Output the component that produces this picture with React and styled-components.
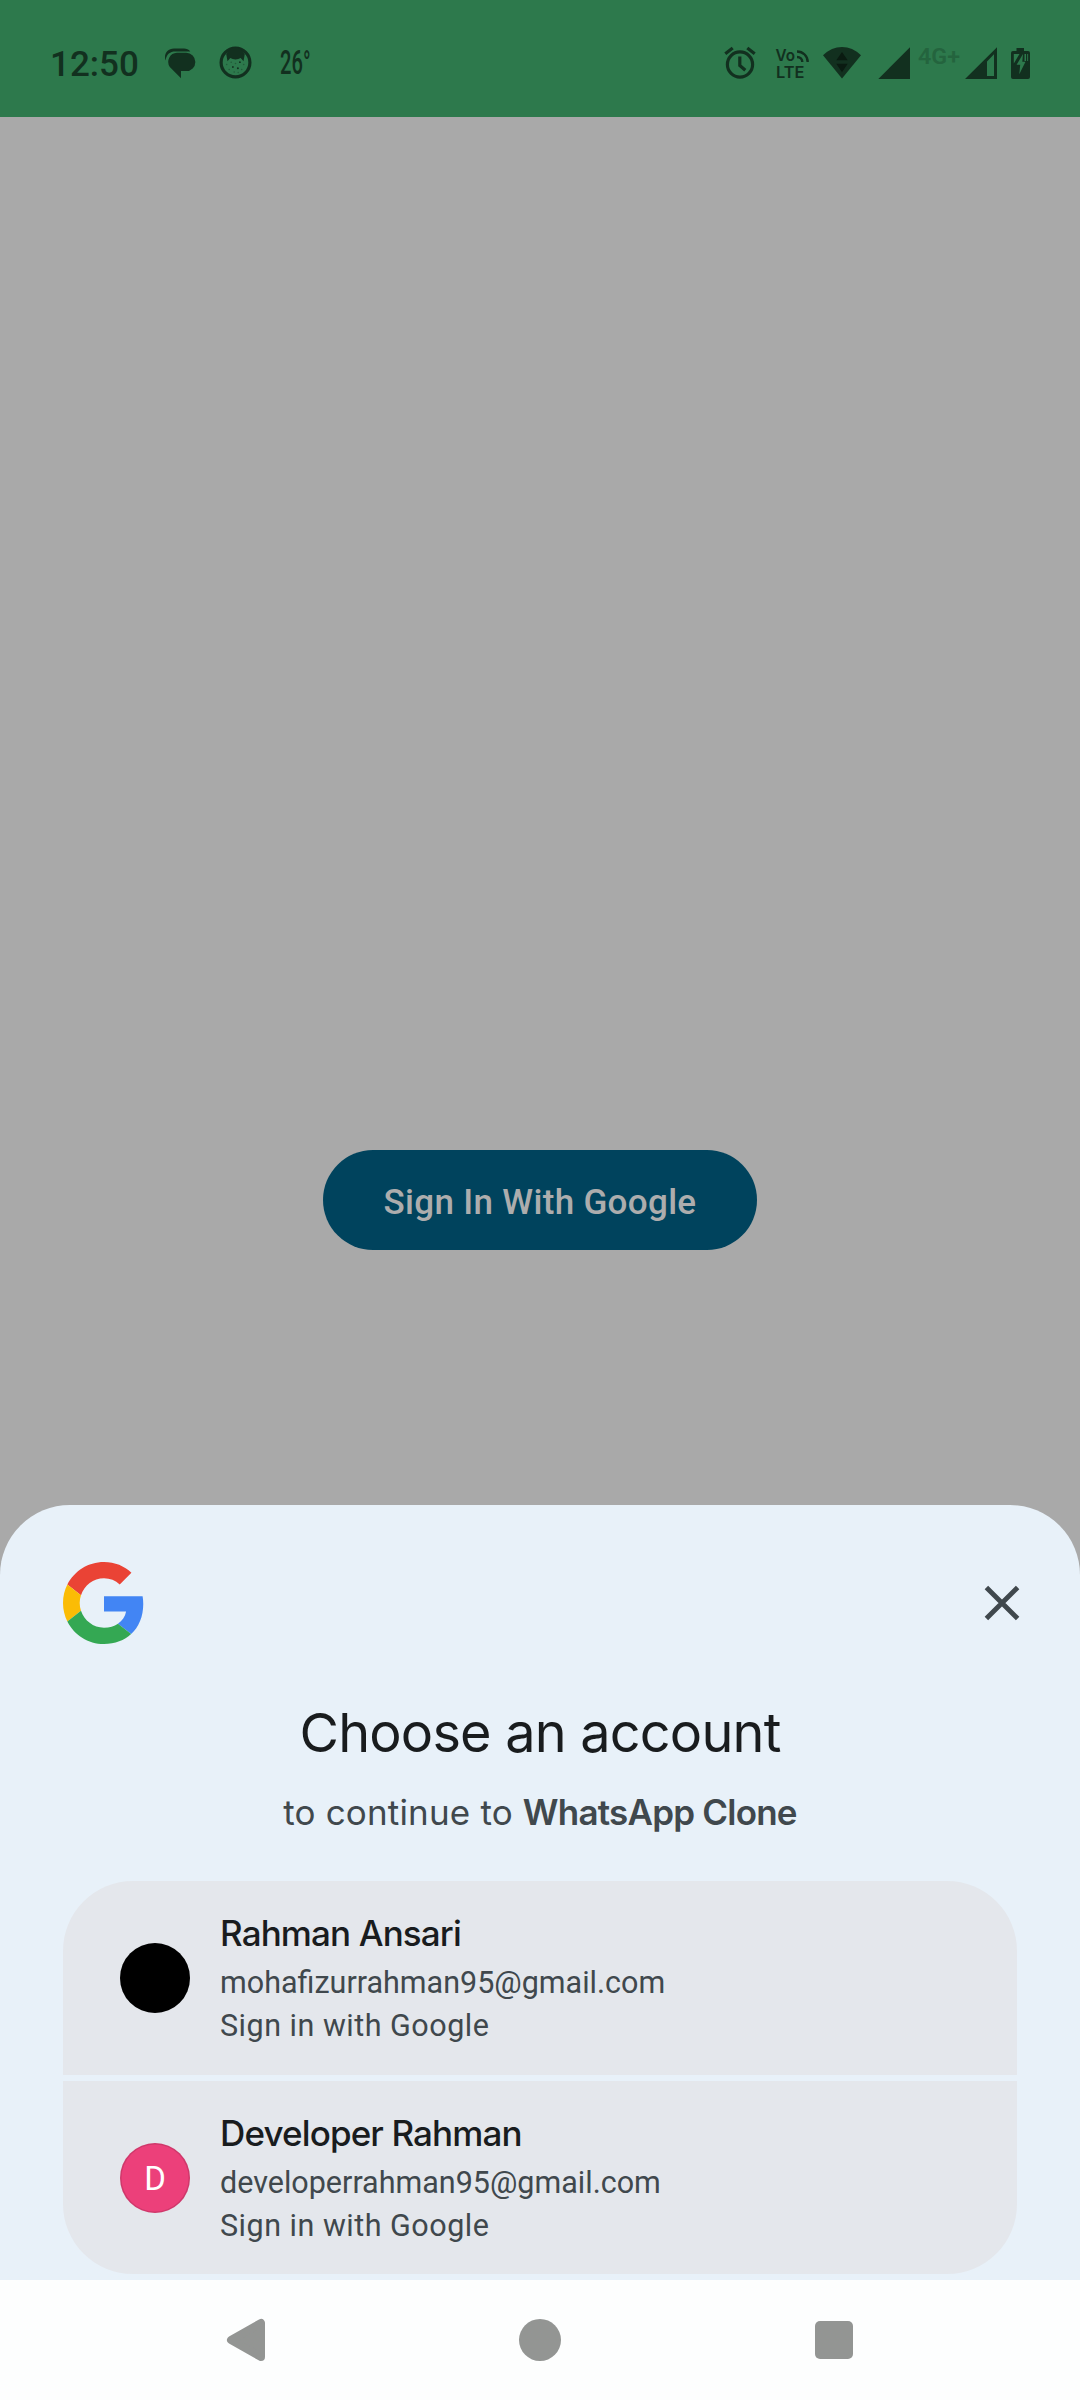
import React from "react";
import styled, { createGlobalStyle } from "styled-components";

const INK = "#12301f";
const GREEN = "#2d794c";

const GlobalStyle = createGlobalStyle`
  html, body { margin: 0; padding: 0; background: #a9a9a9; }
  *, *::before, *::after { box-sizing: border-box; }
  svg { display: block; flex: none; overflow: visible; }
`;

const Screen = styled.div`
  display: flex;
  flex-direction: column;
  width: 1080px;
  height: 2400px;
  overflow: hidden;
  background: #a9a9a9;
  font-family: Inter, "Liberation Sans", sans-serif;
`;

const StatusBar = styled.header`
  display: flex;
  flex: none;
  justify-content: space-between;
  height: 117px;
  padding: 8px 50px 0;
  background: ${GREEN};
  color: ${INK};
  font-family: Roboto, sans-serif;
`;

const StatusGroup = styled.div`
  display: flex;
  align-items: center;
`;

const Clock = styled.span`
  width: 115px;
  padding-top: 5px;
  font-size: 35px;
  font-weight: 500;
  line-height: 42px;
`;

const Temperature = styled.span`
  margin-left: 28px;
  padding-top: 1px;
  font-size: 33px;
  font-weight: 500;
  line-height: 40px;
  transform: scaleX(0.61);
  transform-origin: left center;
`;

const Glyph = styled.svg`
  margin-left: ${(p) => p.$gap || 0}px;
`;

const AppArea = styled.main`
  display: flex;
  flex: 1;
  justify-content: center;
  align-items: flex-start;
  padding-top: 1033px;
`;

const SignInButton = styled.button`
  width: 434px;
  height: 100px;
  padding: 5px 0 0;
  border: 0;
  border-radius: 50px;
  background: #00435d;
  color: #adadad;
  font-family: Roboto, sans-serif;
  font-size: 35px;
  font-weight: 500;
  letter-spacing: 0.32px;
`;

const Sheet = styled.section`
  flex: none;
  height: 775px;
  padding: 57px 63px 0;
  border-radius: 70px 70px 0 0;
  background: #e8f1f9;
`;

const SheetHeader = styled.div`
  display: flex;
  align-items: center;
  justify-content: space-between;
  height: 82px;
`;

const CloseButton = styled.button`
  display: flex;
  margin-right: -5px;
  padding: 0;
  border: 0;
  background: none;
`;

const Title = styled.h1`
  margin: 57px 0 0;
  color: #191c1e;
  font-size: 54px;
  font-weight: 400;
  line-height: 64px;
  letter-spacing: -0.8px;
  text-align: center;
`;

const Subtitle = styled.p`
  margin: 23px 0 45px;
  color: #40484d;
  font-size: 35px;
  line-height: 48px;
  letter-spacing: 0.17px;
  text-align: center;
`;

const AppName = styled.strong`
  font-weight: 600;
  letter-spacing: -0.78px;
`;

const AccountList = styled.div`
  display: flex;
  flex-direction: column;
  gap: 6px;
  overflow: hidden;
  border-radius: 70px;
`;

const AccountRow = styled.div`
  display: flex;
  align-items: center;
  gap: 30px;
  height: 194px;
  padding-left: 57px;
  background: #e4e7ec;

  &:last-child {
    height: 193px;
  }
`;

const Avatar = styled.div`
  width: 70px;
  height: 70px;
  border-radius: 50%;
  background: ${(p) => p.$color};
  box-shadow: inset 0 0 0 1.5px rgba(0, 0, 0, 0.12);
  color: #fff;
  font-family: Roboto, sans-serif;
  font-size: 33px;
  line-height: 71px;
  text-align: center;
`;

const AccountText = styled.div`
  display: flex;
  flex-direction: column;
  padding-bottom: 4px;
`;

const AccountName = styled.span`
  color: #191c1e;
  font-size: 35px;
  font-weight: 500;
  line-height: 56px;
  letter-spacing: -0.87px;
`;

const AccountDetail = styled.span`
  color: #40484d;
  font-family: Roboto, sans-serif;
  font-size: 30.5px;
  line-height: 43px;
  letter-spacing: ${(p) => p.$tracking || "normal"};
`;

const NavBar = styled.nav`
  display: grid;
  flex: none;
  grid-template-columns: repeat(3, 294px);
  justify-content: center;
  align-items: center;
  justify-items: center;
  height: 120px;
  background: #fdfefe;
`;

const ChatIcon = () => (
  <Glyph width="32" height="32" viewBox="165 47 32 32" fill={INK}>
    <path d="M177 52.800h9.200a9.100 9.100 0 0 1 0 18.300H181v7.200l-11.200-11.300A9.100 9.100 0 0 1 177 52.800z" />
    <path d="M165.600 60.500c.8-6.500 4.700-9.100 9.500-9.100h15.200c-1.700-2.200-3.900-3-6.300-3H174c-5.500 0-9 4-9 8.500 0 1.300.1 2.500.6 3.600z" />
  </Glyph>
);

const FaceIcon = () => (
  <Glyph $gap={22} width="33" height="33" viewBox="218.800 45.500 33 33">
    <circle cx="235.300" cy="62" r="14.400" fill="none" stroke={INK} strokeWidth="3.200" />
    <path d="M226 53.500Q229.500 47 235.300 47t9.300 6.500l-1.300 7.200-2.800-3.200q-2.200 1.400-5.200 1.400t-5.200-1.400l-2.800 3.200z" fill={INK} />
    <g fill={INK}>
      <circle cx="232.700" cy="66.500" r=".9" />
      <circle cx="237.700" cy="67.800" r="1" />
      <circle cx="239.700" cy="61.700" r=".9" />
    </g>
    <g fill={INK} opacity=".4">
      <circle cx="226.500" cy="64" r=".8" />
      <circle cx="229" cy="69" r=".8" />
      <circle cx="231" cy="61.800" r=".8" />
      <circle cx="235.300" cy="63" r=".8" />
      <circle cx="234" cy="71.500" r=".8" />
      <circle cx="241.500" cy="69" r=".8" />
      <circle cx="243.500" cy="64" r=".8" />
      <circle cx="238" cy="72" r=".7" />
    </g>
  </Glyph>
);

const AlarmIcon = () => (
  <Glyph width="32" height="32" viewBox="723.500 46.500 32 32" fill="none" stroke={INK} strokeWidth="3.200">
    <circle cx="739.500" cy="64" r="12.600" />
    <path d="M739.300 56v9l5.500 4.800M724.800 53.300l7.400-5.800M754.200 53.300l-7.400-5.800" />
  </Glyph>
);

const VolteIcon = () => (
  <Glyph $gap={17.5} width="38" height="36" viewBox="773 44 38 36">
    <g fill={INK} fontFamily="Inter, sans-serif" fontWeight="600">
      <text x="775.500" y="60" fontSize="16.500" textLength="19.500" lengthAdjust="spacingAndGlyphs">Vo</text>
      <text x="776" y="77.200" fontSize="16.500" textLength="28.500" lengthAdjust="spacingAndGlyphs">LTE</text>
    </g>
    <path d="M797 50.500c6 0 10.700 4.500 10.700 10.500M797 56c3.200 0 5.300 2 5.300 5" fill="none" stroke={INK} strokeWidth="2.400" />
  </Glyph>
);

const WifiIcon = () => (
  <Glyph $gap={12} width="38" height="32" viewBox="823 46 38 32">
    <path d="M842 77.500L823 54.300Q831.500 46 842 46t19 8.300z" fill={INK} />
    <path d="M836.300 59.300L842 51l5.700 8.300zM836.300 62.800h11.400L842 71.300z" fill="#0a1b11" />
  </Glyph>
);

const SignalFull = () => (
  <Glyph $gap={17} width="32" height="32" viewBox="878 46 32 32">
    <path d="M878.300 78L910 46.300V78z" fill={INK} />
  </Glyph>
);

const NetworkLabel = () => (
  <Glyph $gap={7.5} width="43" height="40" viewBox="917.500 42 43 40">
    <text x="917.500" y="63" fill="#24643e" fontFamily="Roboto, sans-serif" fontSize="22.500" fontWeight="600" textLength="42" lengthAdjust="spacingAndGlyphs">4G+</text>
  </Glyph>
);

const SignalPartial = () => (
  <Glyph $gap={4.5} width="32" height="32" viewBox="965 46 32 32">
    <path d="M965 78l32-31.700V78zM987 60.500V75h7V53.200z" fill={INK} fillRule="evenodd" />
  </Glyph>
);

const BatteryIcon = () => (
  <Glyph $gap={14} width="19" height="32" viewBox="1011 46 19 32">
    <path d="M1016.500 47h7.500v3h4a2 2 0 0 1 2 2v24a2 2 0 0 1-2 2h-15a2 2 0 0 1-2-2V52a2 2 0 0 1 2-2h3.500z" fill={INK} />
    <path d="M1013.800 53h5.700l-5.700 9.500zM1023 53l-6.400 10.800h3.600l-.9 9.500 6.200-12.500h-3.200zM1024.500 53h1.500v7h-1.500zM1027.200 53h.900v7h-.900z" fill={GREEN} />
  </Glyph>
);

const GoogleLogo = () => (
  <svg width="82" height="82" viewBox="0 0 48 48">
    <path fill="#EA4335" d="M24 9.500c3.540 0 6.710 1.220 9.210 3.600l6.850-6.850C35.900 2.380 30.470 0 24 0 14.620 0 6.510 5.380 2.560 13.220l7.980 6.190C12.430 13.720 17.740 9.500 24 9.500z" />
    <path fill="#4285F4" d="M46.980 24.550c0-1.570-.150-3.090-.380-4.550H24v9.020h12.940c-.580 2.960-2.260 5.480-4.780 7.180l7.730 6c4.510-4.180 7.090-10.360 7.090-17.650z" />
    <path fill="#FBBC05" d="M10.530 28.590c-.480-1.450-.760-2.990-.760-4.590s.270-3.140.760-4.590l-7.980-6.190C.920 16.460 0 20.120 0 24c0 3.880.920 7.540 2.560 10.780l7.970-6.190z" />
    <path fill="#34A853" d="M24 48c6.480 0 11.930-2.130 15.890-5.810l-7.730-6c-2.150 1.450-4.920 2.300-8.160 2.300-6.260 0-11.570-4.220-13.470-9.910l-7.980 6.190C6.510 42.620 14.620 48 24 48z" />
  </svg>
);

const CloseIcon = () => (
  <svg width="40" height="40" viewBox="-20 -20 40 40" stroke="#40484d" strokeWidth="4.900">
    <path d="M-15.600 -15.600L15.600 15.600M15.600 -15.600L-15.600 15.600" />
  </svg>
);

const BackIcon = () => (
  <svg width="40" height="44" viewBox="226 2318 40 44">
    <path d="M231 2340L261 2323V2357z" fill="#939593" stroke="#939593" strokeWidth="8" strokeLinejoin="round" />
  </svg>
);

const HomeIcon = styled.div`
  width: 42px;
  height: 42px;
  border-radius: 50%;
  background: #939593;
`;

const RecentsIcon = styled.div`
  width: 38px;
  height: 38px;
  border-radius: 5px;
  background: #939593;
`;

const accounts = [
  { name: "Rahman Ansari", email: "mohafizurrahman95@gmail.com", color: "#000", initial: "" },
  { name: "Developer Rahman", email: "developerrahman95@gmail.com", color: "#ec407a", initial: "D" },
];

export default function App() {
  return (
    <Screen>
      <GlobalStyle />
      <StatusBar>
        <StatusGroup>
          <Clock>12:50</Clock>
          <ChatIcon />
          <FaceIcon />
          <Temperature>26°</Temperature>
        </StatusGroup>
        <StatusGroup>
          <AlarmIcon />
          <VolteIcon />
          <WifiIcon />
          <SignalFull />
          <NetworkLabel />
          <SignalPartial />
          <BatteryIcon />
        </StatusGroup>
      </StatusBar>
      <AppArea>
        <SignInButton>Sign In With Google</SignInButton>
      </AppArea>
      <Sheet>
        <SheetHeader>
          <GoogleLogo />
          <CloseButton aria-label="Close">
            <CloseIcon />
          </CloseButton>
        </SheetHeader>
        <Title>Choose an account</Title>
        <Subtitle>
          to continue to <AppName>WhatsApp Clone</AppName>
        </Subtitle>
        <AccountList>
          {accounts.map((a) => (
            <AccountRow key={a.email}>
              <Avatar $color={a.color}>{a.initial}</Avatar>
              <AccountText>
                <AccountName>{a.name}</AccountName>
                <AccountDetail>{a.email}</AccountDetail>
                <AccountDetail $tracking="0.5px">Sign in with Google</AccountDetail>
              </AccountText>
            </AccountRow>
          ))}
        </AccountList>
      </Sheet>
      <NavBar>
        <BackIcon />
        <HomeIcon />
        <RecentsIcon />
      </NavBar>
    </Screen>
  );
}
